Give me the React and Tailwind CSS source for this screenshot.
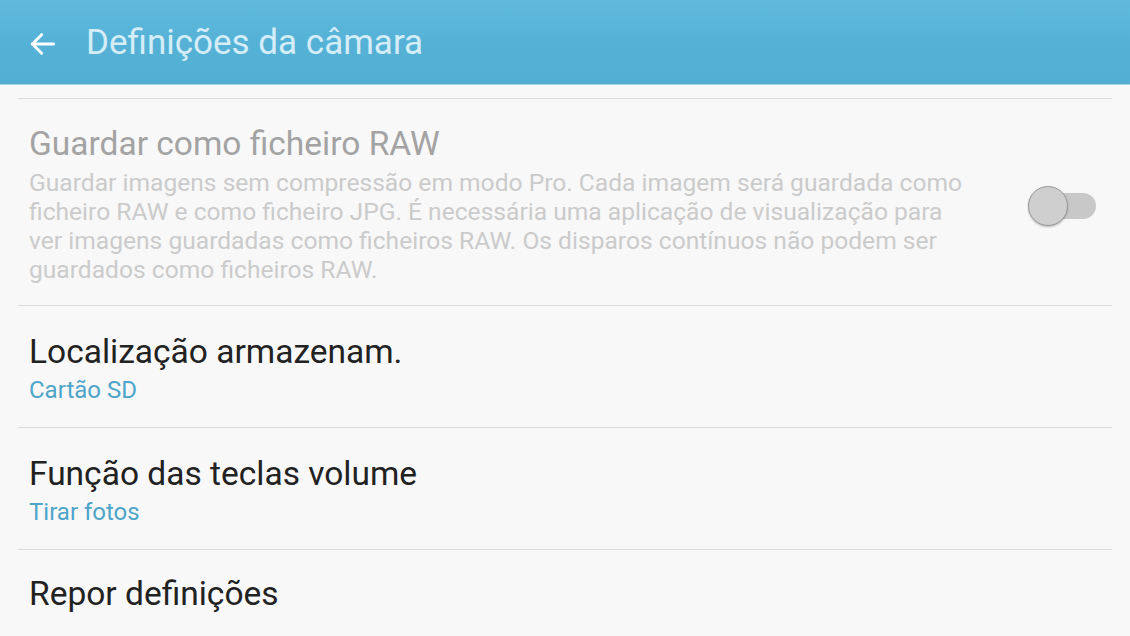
import React from 'react';

const Divider = () => <div className="h-px bg-[#dcdcdc]" />;

const Row = ({ title, sub }) => (
  <div className="pl-[11px] pt-[27px] pb-[22px]">
    <div className="text-[33.5px] leading-[38px] text-[#222222]">{title}</div>
    <div className="mt-[5px] text-[24px] leading-[29px] text-[#4ea5c9]">{sub}</div>
  </div>
);

export default function App() {
  return (
    <div className="w-[1130px] h-[636px] overflow-hidden bg-[#f8f8f8] font-['Roboto',sans-serif]">
      {/* header */}
      <div className="h-[85px] pt-[3px] bg-gradient-to-b from-[#5fbade] via-[#55b2d6] to-[#52aed3] border-b border-[#a9d6e8] flex items-center">
        <svg className="ml-[27px] w-[32px] h-[32px]" viewBox="0 0 24 24" fill="none" stroke="#ffffff" strokeWidth="2.2" strokeLinecap="round" strokeLinejoin="round">
          <path d="M20 12H4" />
          <path d="M11 5l-7 7 7 7" />
        </svg>
        <div className="ml-[27px] text-[35px] text-[#d4edf6]">Definições da câmara</div>
      </div>

      <div className="mx-[18px] mt-[13px]">
        <Divider />
        {/* RAW row (disabled) */}
        <div className="pl-[11px] pt-[26px] pb-[21px] flex items-center">
          <div className="w-[945px]">
            <div className="text-[33.5px] leading-[38px] text-[#a3a3a3]">Guardar como ficheiro RAW</div>
            <div className="mt-[5px] text-[24.6px] leading-[29px] text-[#cbcbcb]">
              Guardar imagens sem compressão em modo Pro. Cada imagem será guardada como ficheiro RAW e como ficheiro JPG. É necessária uma aplicação de visualização para ver imagens guardadas como ficheiros RAW. Os disparos contínuos não podem ser guardados como ficheiros RAW.
            </div>
          </div>
          <div className="ml-auto mr-[16px] mt-[2px] relative w-[68px] h-[42px] flex items-center">
            <div className="absolute left-[10px] right-0 h-[26px] rounded-full bg-[#c8c8c8]" />
            <div className="absolute left-0 w-[40px] h-[40px] rounded-full bg-[#cfcfcf] border border-[#9a9a9a] shadow-[0_1px_2px_rgba(0,0,0,0.25)]" />
          </div>
        </div>
        <Divider />
        <Row title="Localização armazenam." sub="Cartão SD" />
        <Divider />
        <Row title="Função das teclas volume" sub="Tirar fotos" />
        <Divider />
        <div className="pl-[11px] pt-[25px]">
          <div className="text-[33.5px] leading-[38px] text-[#222222]">Repor definições</div>
        </div>
      </div>
    </div>
  );
}
